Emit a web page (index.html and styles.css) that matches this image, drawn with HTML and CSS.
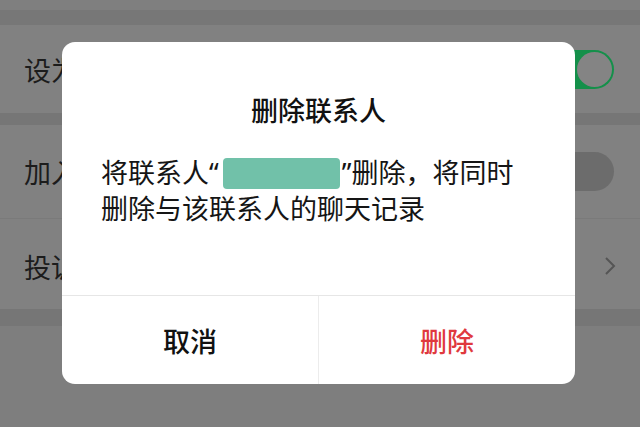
FILE: index.html
```html
<!DOCTYPE html>
<html lang="zh-CN">
<head>
  <meta charset="UTF-8">
  <meta name="viewport" content="width=device-width, initial-scale=1.0">
  <title>删除联系人</title>
  <link rel="stylesheet" href="styles.css">
</head>
<body>
  <div class="page">
    <div class="top-strip"></div>
    <div class="row">
      <span class="row-label">设为星标朋友</span>
      <span class="switch switch-on"><span class="knob"></span></span>
    </div>
    <div class="gap"></div>
    <div class="row row-mid">
      <span class="row-label">加入黑名单</span>
      <span class="switch switch-off"></span>
    </div>
    <div class="row row-last">
      <span class="row-label">投诉</span>
      <svg class="chevron" width="12" height="20" viewBox="0 0 12 20">
        <path d="M2 2 L10 10 L2 18" fill="none" stroke="#555" stroke-width="2"/>
      </svg>
    </div>
    <div class="gap gap-low"></div>
    <div class="rest"></div>
  </div>

  <div class="dialog">
    <div class="dialog-title">删除联系人</div>
    <div class="dialog-body">将联系人<span class="quote">“</span><span class="masked"></span><span class="quote">”</span>删除，将同时删除与该联系人的聊天记录</div>
    <div class="dialog-actions">
      <div class="action">取消</div>
      <div class="action action-danger">删除</div>
    </div>
  </div>
</body>
</html>
```

FILE: styles.css
```css
body {
  margin: 0;
  background-color: #7f7f7f;
  font-family: "Noto Sans CJK SC", "Noto Sans", sans-serif;
  overflow: hidden;
}

.page {
  display: flex;
  flex-direction: column;
  height: 427px;
}

.top-strip {
  height: 15px;
  margin-top: 10px;
  background-color: #777777;
}

.row {
  display: flex;
  justify-content: space-between;
  align-items: center;
  height: 88px;
  padding: 0 26px 0 24px;
  background-color: #818181;
}

.row-mid {
  height: 93px;
  border-bottom: 1px solid #7a7a7a;
}

.row-last {
  height: 86px;
  padding-top: 4px;
}

.row-label {
  font-size: 27px;
  color: #1c1c1c;
}

.gap {
  height: 12px;
  background-color: #767676;
}

.gap-low {
  height: 17px;
}

.rest {
  flex: 1;
  background-color: #7e7e7e;
}

.switch {
  display: flex;
  align-items: center;
  width: 74px;
  height: 39px;
  border-radius: 20px;
  box-sizing: border-box;
}

.switch-on {
  justify-content: flex-end;
  background-color: #14904a;
  padding: 0 2px;
}

.switch-on .knob {
  width: 35px;
  height: 35px;
  border-radius: 50%;
  background-color: #848484;
}

.switch-off {
  background-color: #6c6c6c;
}

.chevron {
  margin-right: -2px;
}

.dialog {
  position: absolute;
  left: 62px;
  top: 42px;
  width: 513px;
  height: 342px;
  display: flex;
  flex-direction: column;
  background-color: #ffffff;
  border-radius: 13px;
  overflow: hidden;
}

.dialog-title {
  padding-top: 50px;
  line-height: 36px;
  font-size: 27px;
  font-weight: 500;
  text-align: center;
  color: #111111;
}

.dialog-body {
  margin-top: 26px;
  padding: 0 45px 0 39px;
  font-size: 27px;
  line-height: 35px;
  color: #151515;
}

.quote {
  font-family: "Noto Sans", sans-serif;
}

.masked {
  display: inline-block;
  width: 117px;
  height: 31px;
  margin: 0 2px 0 4px;
  vertical-align: -6px;
  border-radius: 4px;
  background-color: #71c1a9;
}

.dialog-actions {
  display: flex;
  margin-top: auto;
  height: 88px;
  border-top: 1px solid #e6e6e6;
}

.action {
  flex: 1;
  display: flex;
  justify-content: center;
  align-items: center;
  font-size: 27px;
  font-weight: 500;
  color: #111111;
}

.action-danger {
  border-left: 1px solid #ececec;
  color: #e0393e;
}
```
